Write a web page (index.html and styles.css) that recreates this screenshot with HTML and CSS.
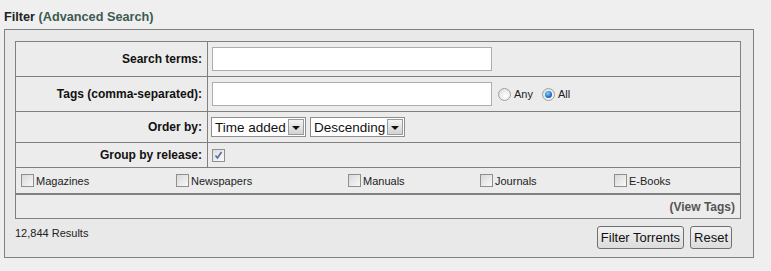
FILE: index.html
```html
<!doctype html>
<html lang="en">
<head>
	<meta charset="UTF-8">
	<title>Torrents</title>
	<link rel="stylesheet" href="styles.css">
</head>
<body>
	<h3 class="head">Filter <a class="adv">(Advanced Search)</a></h3>
	<div class="box">
		<div class="ftable">
			<div class="row r1">
				<div class="label">Search terms:</div>
				<div class="value"><span class="inputtext"></span></div>
			</div>
			<div class="row r2">
				<div class="label">Tags (comma-separated):</div>
				<div class="value">
					<span class="inputtext"></span>
					<span class="radio"></span><span class="rlabel">Any</span>
					<span class="radio on"></span><span class="rlabel">All</span>
				</div>
			</div>
			<div class="row r3">
				<div class="label">Order by:</div>
				<div class="value">
					<span class="select s1"><span class="stext">Time added</span><span class="arrow"></span></span>
					<span class="select s2"><span class="stext">Descending</span><span class="arrow"></span></span>
				</div>
			</div>
			<div class="row r4">
				<div class="label">Group by release:</div>
				<div class="value">
					<span class="check on">
						<svg width="11" height="11" viewBox="0 0 11 11"><path d="M2.5 5.5 L4.5 8 L8.5 2" fill="none" stroke="#4f6ea8" stroke-width="1.6"/></svg>
					</span>
				</div>
			</div>
			<div class="cats">
				<label class="cat"><span class="check"></span>Magazines</label>
				<label class="cat"><span class="check"></span>Newspapers</label>
				<label class="cat"><span class="check"></span>Manuals</label>
				<label class="cat"><span class="check"></span>Journals</label>
				<label class="cat"><span class="check"></span>E-Books</label>
			</div>
			<div class="viewtags"><a>(View Tags)</a></div>
		</div>
		<div class="foot">
			<span class="results">12,844 Results</span>
			<div class="btns">
				<span class="btn">Filter Torrents</span>
				<span class="btn">Reset</span>
			</div>
		</div>
	</div>
</body>
</html>
```

FILE: styles.css
```css
body{
	margin:0;
	background:#efefef;
	font-family:"Liberation Sans", Arial, sans-serif;
	font-size:11px;
	color:#222;
}
.head{
	margin:0;
	padding:10px 0 0 4px;
	height:19px;
	line-height:14px;
	font-size:12.7px;
	font-weight:bold;
	color:#222;
}
.head .adv{
	color:#3d5b4f;
}
.box{
	margin-left:4px;
	width:750px;
	box-sizing:border-box;
	border:1px solid #808080;
	background:#e9e9e9;
	padding:11px 12px 8px 10px;
}
.ftable{
	border:1px solid #808080;
	background:#ececec;
}
.row{
	display:grid;
	grid-template-columns:192px 1fr;
	box-sizing:border-box;
	border-bottom:1px solid #808080;
}
.r1, .r2{ height:35px; }
.r3{ height:31px; }
.r4{ height:25px; }
.row > div{
	box-sizing:border-box;
	display:flex;
	align-items:center;
	min-width:0;
}
.label{
	justify-content:flex-end;
	border-right:1px solid #808080;
	padding-right:5px;
	font-weight:bold;
	font-size:12px;
	color:#111;
}
.value{
	padding-left:4px;
}
.inputtext{
	display:block;
	width:280px;
	height:24px;
	box-sizing:border-box;
	border:1px solid #abadb3;
	background:#fff;
}
.radio{
	display:inline-block;
	width:11px;
	height:11px;
	border-radius:50%;
	border:1px solid #a0a0a0;
	background:radial-gradient(circle at 60% 65%, #fff 0%, #e4e4e4 70%);
	margin-left:6px;
	position:relative;
}
.radio.on{
	margin-left:9px;
}
.radio.on::after{
	content:"";
	position:absolute;
	left:2px;
	top:2px;
	width:7px;
	height:7px;
	border-radius:50%;
	background:radial-gradient(circle at 40% 35%, #8fd0ff 0%, #1a6fc0 60%, #0d4f96 100%);
}
.rlabel{
	margin-left:3px;
	color:#222;
}
.select{
	display:flex;
	align-items:center;
	justify-content:space-between;
	height:20px;
	box-sizing:border-box;
	border:1px solid #8e8e8e;
	background:#fff;
	padding:0 1px 0 3px;
	font-size:13.5px;
	color:#111;
	white-space:nowrap;
	overflow:hidden;
}
.s1{ width:95px; margin-left:-1px; }
.s2{ width:95px; margin-left:4px; }
.arrow{
	display:block;
	flex:none;
	width:16px;
	height:16px;
	box-sizing:border-box;
	border:1px solid #9a9a9a;
	background:linear-gradient(#f4f4f4, #d2d2d2);
	position:relative;
}
.arrow::after{
	content:"";
	position:absolute;
	left:3px;
	top:6px;
	border-left:4px solid transparent;
	border-right:4px solid transparent;
	border-top:4px solid #111;
}
.check{
	display:inline-flex;
	align-items:center;
	justify-content:center;
	width:13px;
	height:13px;
	box-sizing:border-box;
	border:1px solid #8f8f8f;
	background:linear-gradient(135deg, #d8d8d8, #f8f8f8);
}
.check.on{
	background:linear-gradient(135deg, #dcdcdc, #fafafa);
}
.cats{
	display:grid;
	grid-template-columns:155px 172px 132px 134px 1fr;
	height:27px;
	box-sizing:border-box;
	align-items:center;
	padding-left:5px;
	border-bottom:2px solid #808080;
}
.cat{
	display:flex;
	align-items:center;
	gap:2px;
	color:#222;
}
.viewtags{
	height:23px;
	display:flex;
	align-items:center;
	justify-content:flex-end;
	padding-right:5px;
	font-weight:bold;
	color:#555;
	font-size:12px;
}
.foot{
	display:flex;
	justify-content:space-between;
	align-items:flex-start;
	padding-top:7px;
}
.results{
	font-size:11px;
	color:#222;
	line-height:12px;
	padding-top:1px;
}
.btns{
	display:flex;
	gap:6px;
	margin-right:9px;
}
.btn{
	display:block;
	height:23px;
	box-sizing:border-box;
	padding:0 3px;
	line-height:21px;
	border:1px solid #707070;
	border-radius:3px;
	background:linear-gradient(#f2f2f2, #dcdcdc);
	font-size:13px;
	color:#111;
}
```
